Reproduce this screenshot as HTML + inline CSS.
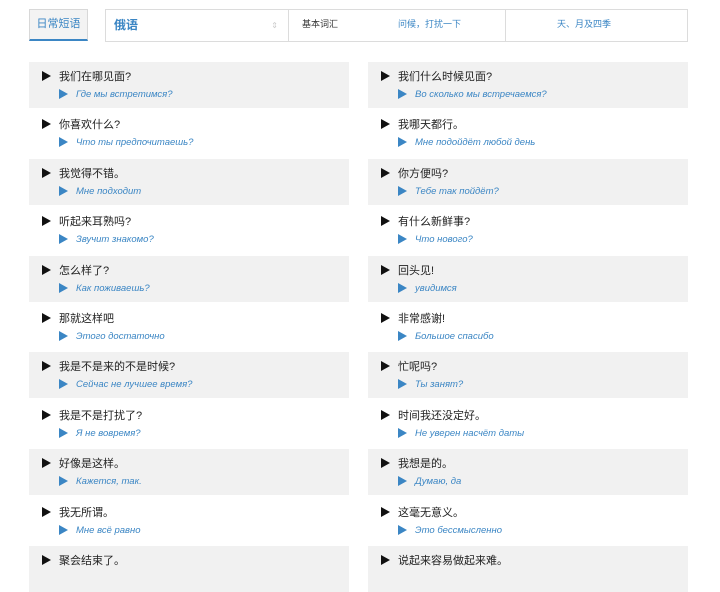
<!DOCTYPE html>
<html><head><meta charset="utf-8"><style>
*{margin:0;padding:0;box-sizing:border-box}
body{width:720px;height:570px;background:#fff;font-family:"Liberation Sans","Noto Sans CJK SC",sans-serif;position:relative;overflow:hidden}
.tab{position:absolute;left:29px;top:9px;width:59px;height:32px;background:#f3f3f3;border:1px solid #d8d8d8;border-bottom:2px solid #3b86c4;color:#3b86c4;font-size:11px;text-align:center;line-height:29px}
.bar{position:absolute;left:105px;top:9px;width:583px;height:33px;border:1px solid #dcdcdc;border-left:none}
.sel{position:absolute;left:105px;top:9px;width:184px;height:33px;border:1px solid #dcdcdc;color:#3b86c4;font-size:12px;font-weight:bold;line-height:31px;padding-left:8px}
.sel span{position:absolute;right:10px;color:#ccc;font-size:8px;font-weight:normal}
.c{position:absolute;top:9px;height:33px;line-height:31px;font-size:9px}
.row{position:absolute;height:46px;width:320px}
.g{background:#f1f1f1}
.zh{position:absolute;left:30px;top:6px;font-size:11px;color:#222}
.ru{position:absolute;left:47px;top:27px;font-size:9.5px;color:#3b86c4;font-style:italic}
.t1,.t2{position:absolute;width:0;height:0;border-top:5px solid transparent;border-bottom:5px solid transparent}
.t1{left:13px;top:9px;border-left:9px solid #111}
.t2{left:30px;top:27px;border-left:9px solid #3b86c4}
</style></head><body>
<div class="tab">日常短语</div>
<div class="bar"></div>
<div class="sel">俄语<span>⇕</span></div>
<div class="c" style="left:302px;color:#333">基本词汇</div>
<div class="c" style="left:398px;color:#3b86c4">问候，打扰一下</div>
<div style="position:absolute;left:505px;top:9px;width:1px;height:33px;background:#dcdcdc"></div>
<div class="c" style="left:557px;color:#3b86c4">天、月及四季</div>
<div id="rows"></div>
<script>
var L=[["我们在哪见面?","Где мы встретимся?"],["你喜欢什么?","Что ты предпочитаешь?"],["我觉得不错。","Мне подходит"],["听起来耳熟吗?","Звучит знакомо?"],["怎么样了?","Как поживаешь?"],["那就这样吧","Этого достаточно"],["我是不是来的不是时候?","Сейчас не лучшее время?"],["我是不是打扰了?","Я не вовремя?"],["好像是这样。","Кажется, так."],["我无所谓。","Мне всё равно"],["聚会结束了。",""]];
var R=[["我们什么时候见面?","Во сколько мы встречаемся?"],["我哪天都行。","Мне подойдёт любой день"],["你方便吗?","Тебе так пойдёт?"],["有什么新鲜事?","Что нового?"],["回头见!","увидимся"],["非常感谢!","Большое спасибо"],["忙呢吗?","Ты занят?"],["时间我还没定好。","Не уверен насчёт даты"],["我想是的。","Думаю, да"],["这毫无意义。","Это бессмысленно"],["说起来容易做起来难。",""]];
var h="";
for(var i=0;i<11;i++){var t=Math.round(62+i*48.4);var g=i%2==0?" g":"";
[[29,L],[368,R]].forEach(function(p){var d=p[1][i];h+='<div class="row'+g+'" style="left:'+p[0]+'px;top:'+t+'px"><div class="t1"></div><div class="zh">'+d[0]+'</div>'+(d[1]?'<div class="t2"></div><div class="ru">'+d[1]+'</div>':'')+'</div>';});}
document.getElementById("rows").innerHTML=h;
</script>
</body></html>
